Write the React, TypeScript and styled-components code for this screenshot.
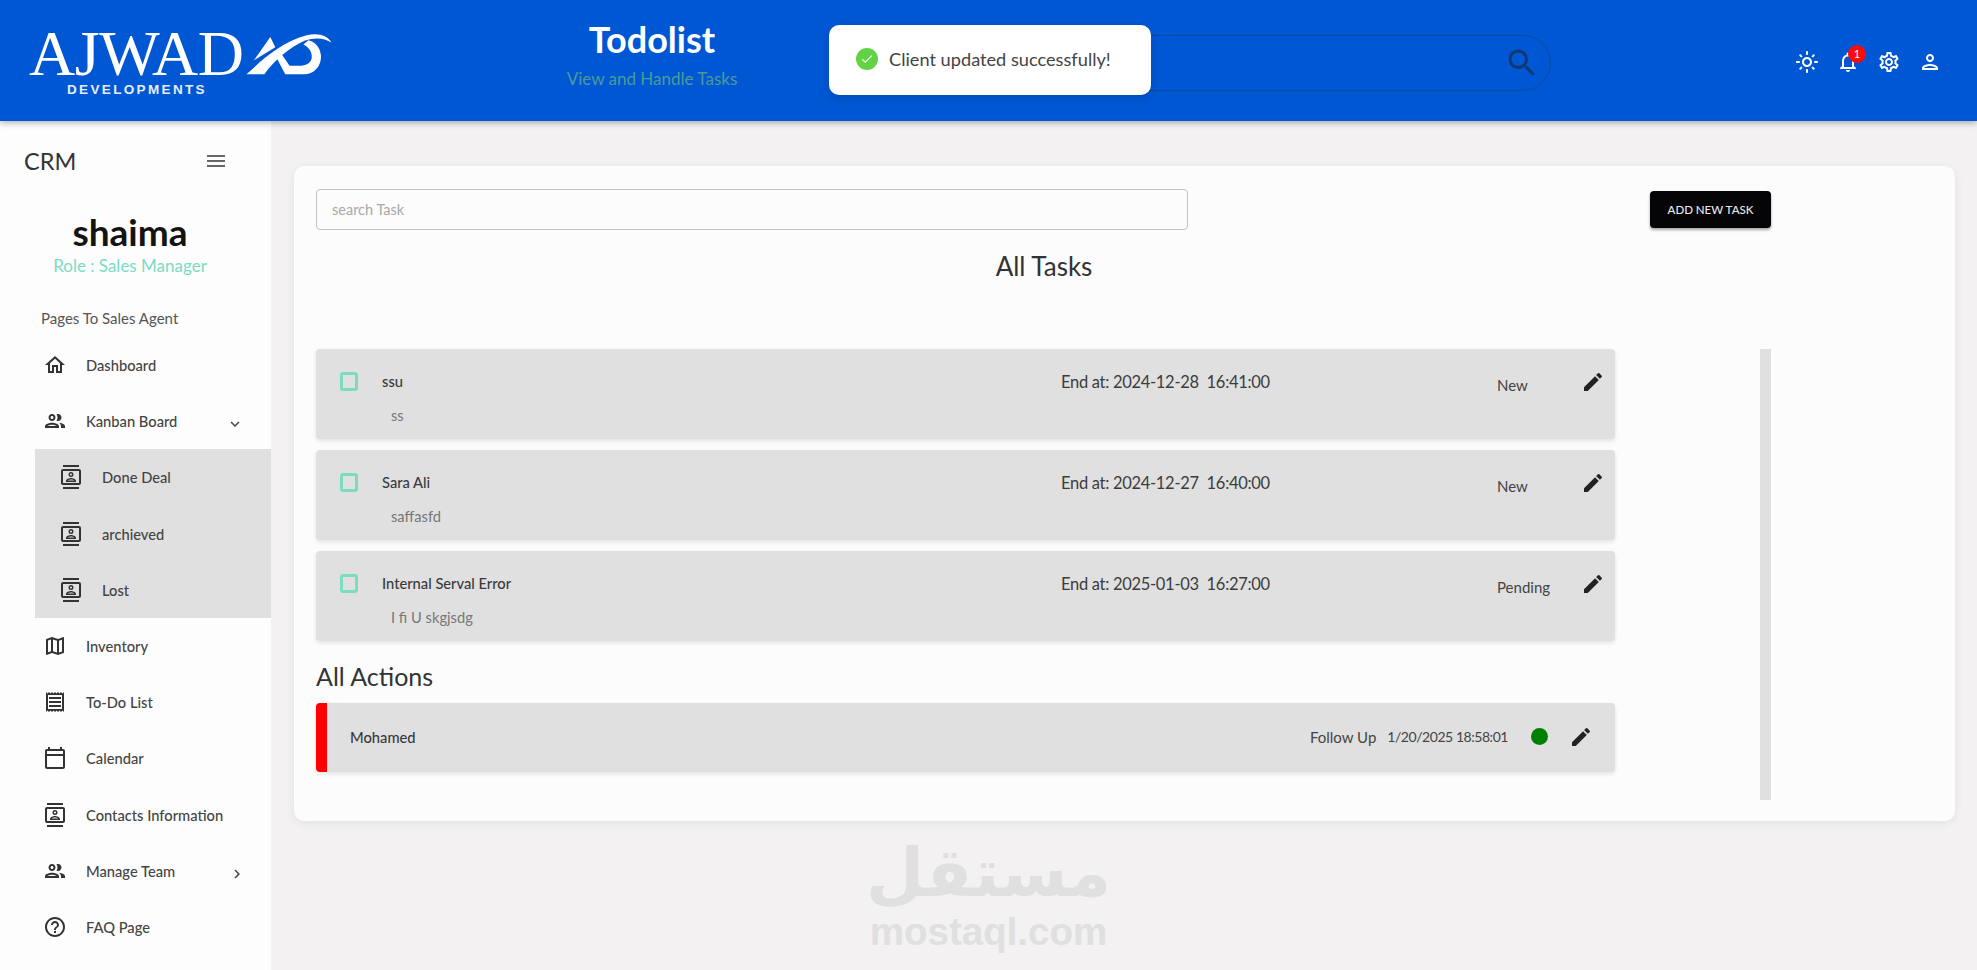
import React from "react";
import styled, { createGlobalStyle } from "styled-components";
import {
  MdOutlineHome, MdOutlinePeople, MdOutlineContacts, MdOutlineMap, MdOutlineReceipt,
  MdOutlineCalendarToday, MdOutlineHelpOutline, MdMenu, MdEdit, MdOutlineLightMode,
  MdOutlineNotifications, MdOutlineSettings, MdOutlinePerson, MdSearch,
  MdKeyboardArrowDown, MdKeyboardArrowRight, MdCheck,
} from "react-icons/md";

const font = `"Lato", "Noto Sans", sans-serif`;

const Global = createGlobalStyle`
  html, body { margin: 0; padding: 0; height: 100%; background: #f3f1f1; overflow: hidden; }
  body { font-family: ${font}; color: #333; }
  * { box-sizing: border-box; }
`;

const Page = styled.div`
  width: 1977px; height: 970px; display: flex; flex-direction: column; position: relative; overflow: hidden;
`;
const Header = styled.header`
  height: 121px; flex: none; background: #0057d4; display: flex; align-items: stretch;
  box-shadow: 0 2px 6px rgba(0,0,0,.3); position: relative; z-index: 2;
`;
const LogoBox = styled.div`
  width: 400px; flex: none; padding: 31px 0 0 29px; display: flex; flex-direction: column;
`;
const LogoTop = styled.div` display: flex; align-items: flex-end; gap: 3px; height: 46px; `;
const LogoWord = styled.span`
  font-family: "Liberation Serif", serif; font-size: 64px; line-height: 46px; color: #fff; letter-spacing: -.5px;
`;
const LogoSub = styled.span`
  font-family: "Liberation Sans", sans-serif; font-size: 13.5px; font-weight: 700; color: #e6eefb;
  letter-spacing: 2.35px; margin: 6px 0 0 38px; line-height: 14px;
`;
const TitleBox = styled.div`
  width: 500px; flex: none; text-align: center; padding-top: 16px; margin-left: 2px;
`;
const Title = styled.div` font-size: 36px; font-weight: 700; color: #fff; line-height: 46px; `;
const SubTitle = styled.div` font-size: 17px; color: #4b9b97; line-height: 22px; margin-top: 6px; `;
const SearchBox = styled.div`
  width: 646px; height: 56px; margin: 35px 0 0 3px; flex: none; border: 1px solid #10499f; border-radius: 28px;
  display: flex; align-items: center; justify-content: flex-end; padding-right: 10px; color: #12386f; font-size: 36px;
`;
const HeaderIcons = styled.div`
  display: flex; gap: 17px; margin: 50px 0 0 244px; color: #fff; font-size: 24px; height: 24px;
`;
const IconWrap = styled.span` position: relative; display: block; width: 24px; height: 24px; `;
const Badge = styled.span`
  position: absolute; top: -5px; right: -6px; width: 18px; height: 18px; border-radius: 50%; background: #f80c0c;
  color: #fff; font-size: 11px; line-height: 18px; text-align: center;
`;
const Toast = styled.div`
  position: absolute; top: 25px; left: 829px; width: 322px; height: 70px; background: #fff; border-radius: 10px;
  box-shadow: 0 3px 10px rgba(0,0,0,.15); z-index: 5; display: flex; align-items: center; padding: 0 0 2px 27px; gap: 11px;
  font-size: 18.2px; color: #444;
`;
const ToastIcon = styled.span`
  width: 22px; height: 22px; border-radius: 50%; background: #61d345; color: #fff; display: flex;
  align-items: center; justify-content: center; font-size: 14px;
`;
const Body = styled.div` flex: 1; display: flex; min-height: 0; `;
const Sidebar = styled.aside` width: 271px; flex: none; background: #fdfdfd; `;
const SideTop = styled.div`
  height: 80px; display: flex; align-items: center; justify-content: space-between; padding: 0 43px 0 24px; color: #333;
`;
const Crm = styled.span` font-size: 23.5px; `;
const MenuIcon = styled.span` font-size: 24px; color: #666; display: flex; `;
const UserName = styled.div` font-size: 37px; font-weight: 700; text-align: center; color: #141414; line-height: 42px; margin-top: 10px; padding-right: 11px; `;
const Role = styled.div` font-size: 17px; color: #7bdcc2; text-align: center; line-height: 22px; margin-top: 2px; padding-right: 11px; `;
const Section = styled.div` font-size: 15px; color: #555; padding-left: 41px; line-height: 20px; margin-top: 31px; margin-bottom: 9px; `;
const Item = styled.div<{ $sub?: boolean }>`
  height: 56.2px; display: flex; align-items: center; position: relative;
  padding-left: ${p => (p.$sub ? "59px" : "43px")}; gap: 19px; font-size: 14.7px; font-weight: 500; color: #444;
  svg { font-size: 24px; color: #333; flex: none; }
`;
const Caret = styled.span<{ $x: number; $y: number }>`
  position: absolute; left: ${p => p.$x}px; top: ${p => p.$y}px; display: flex;
  svg { font-size: 18px; color: #444; }
`;
const SubMenu = styled.div` margin-left: 35px; background: #e0e0e0; `;
const SubInner = styled.div` margin-left: -35px; `;
const Main = styled.main` flex: 1; padding: 45px 22px 0 23px; `;
const Card = styled.section`
  height: 655px; background: #fcfcfc; border-radius: 10px; box-shadow: 0 2px 10px rgba(0,0,0,.07);
  padding: 23px 0 0 22px;
`;
const TopRow = styled.div` display: flex; align-items: flex-start; width: 1455px; justify-content: space-between; `;
const SearchField = styled.div`
  width: 872px; height: 41px; border: 1px solid #c4c4c4; border-radius: 4px; padding-left: 15px;
  display: flex; align-items: center; font-size: 14.5px; color: #a8a8a8;
`;
const AddBtn = styled.button`
  width: 121px; height: 37px; margin-top: 2px; background: #050508; color: #e8e8e8; border: 0; border-radius: 4px;
  font-family: ${font}; font-size: 11.5px; font-weight: 500; box-shadow: 0 2px 3px rgba(0,0,0,.35); padding: 0;
`;
const Heading = styled.h2`
  width: 1456px; margin: 19px 0 0; text-align: center; font-size: 26px; font-weight: 400; color: #333; line-height: 34px;
`;
const Columns = styled.div` display: flex; width: 1455px; justify-content: space-between; margin-top: 66px; `;
const ListCol = styled.div` width: 1299px; display: flex; flex-direction: column; `;
const Track = styled.div` width: 11px; height: 451px; background: #e0e0e0; `;
const TaskRow = styled.div`
  height: 90px; margin-bottom: 11px; background: #e0e0e0; border-radius: 4px; box-shadow: 0 2px 4px rgba(0,0,0,.1);
  display: grid; grid-template-columns: 66px 679px 436px 84px 1fr;
`;
const CheckCell = styled.div` padding: 23px 0 0 24px; `;
const CheckBox = styled.div` width: 18px; height: 19px; border: 3px solid #7bdcc2; border-radius: 3px; `;
const TextCell = styled.div` padding-top: 22px; `;
const TaskTitle = styled.div` font-size: 14.7px; font-weight: 500; color: #3a3a3a; line-height: 20px; `;
const TaskDesc = styled.div` font-size: 14.7px; color: #777; line-height: 20px; margin: 14px 0 0 9px; `;
const EndAt = styled.div` font-size: 16.5px; letter-spacing: -.3px; color: #3c3c3c; padding-top: 21px; line-height: 24px; white-space: pre; `;
const Status = styled.div` font-size: 15px; color: #444; padding-top: 26px; line-height: 20px; `;
const EditCell = styled.div<{ $top?: number }>`
  padding-top: ${p => p.$top ?? 21}px; font-size: 24px; color: #222; line-height: 0;
`;
const ActionsTitle = styled.h2` margin: 3px 0 6px; font-size: 25px; font-weight: 400; line-height: 42px; color: #333; `;
const ActionRow = styled.div`
  height: 69px; background: #e0e0e0; border-radius: 4px; border-left: 11px solid #fe0000; box-shadow: 0 2px 4px rgba(0,0,0,.1);
  display: flex; align-items: center; padding: 0 22px 2px 23px;
`;
const ActionName = styled.div` font-size: 14.7px; font-weight: 500; color: #3a3a3a; flex: 1; `;
const ActionType = styled.div` font-size: 15px; color: #444; margin-right: 11px; `;
const ActionDate = styled.div` font-size: 14px; letter-spacing: -.45px; color: #444; `;
const Dot = styled.span` width: 17px; height: 17px; border-radius: 50%; background: #008000; margin: 0 21px 0 23px; `;
const Watermark = styled.div`
  position: absolute; left: 860px; top: 834px; width: 257px; text-align: center; color: #e0e0e0; pointer-events: none;
`;
const WmArabic = styled.div` font-family: "DejaVu Sans", sans-serif; font-weight: 700; font-size: 67px; line-height: 78px; `;
const WmLatin = styled.div` font-family: "Liberation Sans", sans-serif; font-weight: 700; font-size: 38.5px; line-height: 40px; `;

const LogoMark = () => (
  <svg width="87" height="43" viewBox="18 20 260 130" fill="#fff" style={{ marginBottom: 2, flex: "none" }}>
    <path d="M40 106 L90 35 L105 66 Z" />
    <path d="M18 148 L72 148 C100 108 145 68 195 46 C225 35 255 38 275 52 C262 30 235 22 200 30 C120 50 60 110 18 148 Z" />
    <path d="M110 100 L135 148 L190 148 C225 148 245 120 243 90 C240 65 225 50 205 45 L190 58 C205 65 218 80 215 100 C212 115 195 122 180 122 L148 122 L125 88 Z" />
  </svg>
);

const nav = [
  { icon: <MdOutlineMap />, label: "Inventory" },
  { icon: <MdOutlineReceipt />, label: "To-Do List" },
  { icon: <MdOutlineCalendarToday />, label: "Calendar" },
  { icon: <MdOutlineContacts />, label: "Contacts Information" },
];
const tasks = [
  { t: "ssu", d: "ss", e: "End at: 2024-12-28  16:41:00", s: "New" },
  { t: "Sara Ali", d: "saffasfd", e: "End at: 2024-12-27  16:40:00", s: "New" },
  { t: "Internal Serval Error", d: "I fi U skgjsdg", e: "End at: 2025-01-03  16:27:00", s: "Pending" },
];

export default function App() {
  return (
    <Page>
      <Global />
      <Header>
        <LogoBox>
          <LogoTop><LogoWord>AJWAD</LogoWord><LogoMark /></LogoTop>
          <LogoSub>DEVELOPMENTS</LogoSub>
        </LogoBox>
        <TitleBox>
          <Title>Todolist</Title>
          <SubTitle>View and Handle Tasks</SubTitle>
        </TitleBox>
        <SearchBox><MdSearch /></SearchBox>
        <HeaderIcons>
          <IconWrap><MdOutlineLightMode /></IconWrap>
          <IconWrap><MdOutlineNotifications /><Badge>1</Badge></IconWrap>
          <IconWrap><MdOutlineSettings /></IconWrap>
          <IconWrap><MdOutlinePerson /></IconWrap>
        </HeaderIcons>
      </Header>
      <Toast><ToastIcon><MdCheck /></ToastIcon>Client updated successfully!</Toast>
      <Body>
        <Sidebar>
          <SideTop><Crm>CRM</Crm><MenuIcon><MdMenu /></MenuIcon></SideTop>
          <UserName>shaima</UserName>
          <Role>Role : Sales Manager</Role>
          <Section>Pages To Sales Agent</Section>
          <Item><MdOutlineHome />Dashboard</Item>
          <Item><MdOutlinePeople />Kanban Board<Caret $x={226} $y={22}><MdKeyboardArrowDown /></Caret></Item>
          <SubMenu>
            <SubInner>
              <Item $sub><MdOutlineContacts />Done Deal</Item>
              <Item $sub><MdOutlineContacts />archieved</Item>
              <Item $sub><MdOutlineContacts />Lost</Item>
            </SubInner>
          </SubMenu>
          {nav.map(n => <Item key={n.label}>{n.icon}{n.label}</Item>)}
          <Item><MdOutlinePeople />Manage Team<Caret $x={228} $y={22}><MdKeyboardArrowRight /></Caret></Item>
          <Item><MdOutlineHelpOutline />FAQ Page</Item>
        </Sidebar>
        <Main>
          <Card>
            <TopRow>
              <SearchField>search Task</SearchField>
              <AddBtn>ADD NEW TASK</AddBtn>
            </TopRow>
            <Heading>All Tasks</Heading>
            <Columns>
              <ListCol>
                {tasks.map(t => (
                  <TaskRow key={t.t}>
                    <CheckCell><CheckBox /></CheckCell>
                    <TextCell>
                      <TaskTitle>{t.t}</TaskTitle>
                      <TaskDesc>{t.d}</TaskDesc>
                    </TextCell>
                    <EndAt>{t.e}</EndAt>
                    <Status>{t.s}</Status>
                    <EditCell><MdEdit /></EditCell>
                  </TaskRow>
                ))}
                <ActionsTitle>All Actions</ActionsTitle>
                <ActionRow>
                  <ActionName>Mohamed</ActionName>
                  <ActionType>Follow Up</ActionType>
                  <ActionDate>1/20/2025 18:58:01</ActionDate>
                  <Dot />
                  <EditCell $top={0}><MdEdit /></EditCell>
                </ActionRow>
              </ListCol>
              <Track />
            </Columns>
          </Card>
        </Main>
      </Body>
      <Watermark>
        <WmArabic>مستقل</WmArabic>
        <WmLatin>mostaql.com</WmLatin>
      </Watermark>
    </Page>
  );
}
